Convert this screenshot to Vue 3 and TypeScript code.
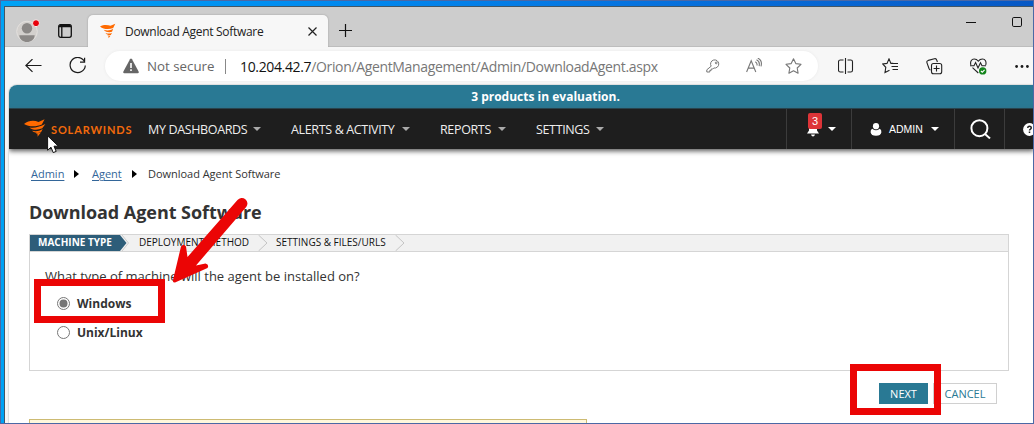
<script setup lang="ts">
import { ref } from 'vue'

interface MenuItem { label: string; cls: string }

const menu: MenuItem[] = [
  { label: 'MY DASHBOARDS', cls: 'm-dash' },
  { label: 'ALERTS & ACTIVITY', cls: 'm-alerts' },
  { label: 'REPORTS', cls: 'm-reports' },
  { label: 'SETTINGS', cls: 'm-settings' },
]
const machines = ['Windows', 'Unix/Linux']
const selected = ref('Windows')
</script>

<template>
  <div class="screen">
    <div class="window">
      <header class="tabstrip">
        <svg class="avatar" width="25" height="25" viewBox="0 0 25 25">
          <circle cx="12" cy="13.5" r="10.3" fill="#d3d0cd" stroke="#e4e1de" />
          <circle cx="12" cy="10.3" r="5.2" fill="#8b8886" />
          <path d="M4.3 17.2H19.7C19.5 21.5 16 24 12 24S4.5 21.5 4.3 17.2Z" fill="#8b8886" />
          <circle cx="21" cy="5.2" r="3.5" fill="#e8000b" stroke="#eee" />
        </svg>
        <svg class="tabsicon" width="14" height="14" viewBox="0 0 14 14" fill="none" stroke="#111" stroke-width="1.3">
          <rect x=".7" y=".7" width="12.6" height="12.6" rx="2" />
          <path d="M1 2.6H13M3.8 3V13" /><path d="M1.5 1.6H12.5" stroke-width="2" />
        </svg>
        <div class="tab">
          <svg class="favicon" width="16" height="16" viewBox="0 0 16 16" fill="#ff6a00">
            <path d="M0 3.5C4 1.3 8 2 10.5 2.8L15.3 .7L13.2 5C9 6.8 3.5 6.5 0 3.5Z" />
            <path d="M3.7 6.7C7.5 8 10 7.5 13.2 5.8L12 8.8C9 9.7 6 9.2 3.7 6.7Z" />
            <path d="M5.5 10C8 10.9 10 10.7 12 9.7L10.8 12C8.7 12.3 6.7 11.7 5.5 10Z" />
            <path d="M7.3 12.6L10.5 12.7L8.5 15.2L8.6 13.6Z" />
          </svg>
          <span class="tabtitle">Download Agent Software</span>
          <svg class="tabclose" width="9" height="9" viewBox="0 0 9 9" stroke="#222" stroke-width="1.2"><path d="M.5 .5L8.5 8.5M8.5 .5L.5 8.5" /></svg>
        </div>
        <svg class="plus" width="14" height="14" viewBox="0 0 14 14" stroke="#111" stroke-width="1.2"><path d="M6.5 0V13M0 6.5H13" /></svg>
        <svg class="minimize" width="10" height="2" viewBox="0 0 10 2"><path d="M0 .5H10" stroke="#111" /></svg>
        <svg class="maximize" width="10" height="10" viewBox="0 0 10 10"><rect x=".5" y=".5" width="9" height="9" rx="1.3" fill="none" stroke="#111" /></svg>
      </header>

      <div class="toolbar">
        <svg class="back" width="17" height="14" viewBox="0 0 17 14" fill="none" stroke="#1b1b1b" stroke-width="1.2"><path d="M.8 6.5H16.5M7.5 .1L.9 6.5L7.5 12.9" /></svg>
        <svg class="reload" width="18" height="18" viewBox="0 0 18 18" fill="none" stroke="#1b1b1b" stroke-width="1.2"><path d="M15.7 5A7.6 7.6 0 1 0 16.3 8.5M15.6 .7V5.2H11" /></svg>
        <div class="address">
          <svg class="warn" width="16" height="16" viewBox="0 0 16 16">
            <path d="M7 1.3Q8 -.3 9 1.3L15.6 13.6Q16.2 15.2 14.7 15.2H1.3Q-.2 15.2 .4 13.6Z" fill="#666" />
            <path d="M8 5V10M8 11.3V13" stroke="#fff" stroke-width="1.6" />
          </svg>
          <span class="notsecure">Not secure</span>
          <i class="divider"></i>
          <span class="url"><b>10.204.42.7</b>/Orion/AgentManagement/Admin/DownloadAgent.aspx</span>
          <svg class="key" width="14" height="14" viewBox="0 0 14 14" fill="none" stroke="#777" stroke-width="1">
            <path d="M5.2 7.2A4.1 4.1 0 1 1 7.8 9L6.8 10H5.2V11.4H3.8V13H.8V10.8L5.2 7.2Z" stroke-linejoin="round" /><circle cx="10.2" cy="3.9" r=".9" />
          </svg>
          <svg class="read" width="17" height="16" viewBox="0 0 17 16" fill="none" stroke="#777" stroke-width="1.1">
            <path d="M.6 14L5.2 2.7L9.8 14M2.2 10.1H8.2M9.3 3.7C10.8 4.5 11.3 5.9 11 7.5M10.5 1.7C13 2.9 13.8 5.3 13.1 8.1M11.8 .2C15 1.6 16 4.7 15 8.3" />
          </svg>
          <svg class="star" width="17" height="16" viewBox="0 0 17 16" fill="none" stroke="#777" stroke-width="1.1" stroke-linejoin="round">
            <path d="M8.5 .8L10.8 5.6L16 6.3L12.2 10L13.1 15.2L8.5 12.7L3.9 15.2L4.8 10L1 6.3L6.2 5.6Z" />
          </svg>
        </div>
        <svg class="split" width="16" height="16" viewBox="0 0 16 16" fill="none" stroke="#222" stroke-width="1.1">
          <path d="M7.5 0V16M5.5 2H2.3Q.5 2 .5 3.8V12.2Q.5 14 2.3 14H5.5M9.5 2H12.7Q14.5 2 14.5 3.8V12.2Q14.5 14 12.7 14H9.5" />
        </svg>
        <svg class="favs" width="17" height="16" viewBox="0 0 17 16" fill="none" stroke="#222" stroke-width="1.1">
          <path d="M11.2 5.4H8.9L7 .9L5 5.4L.8 6L3.8 9.3L3 14.5L7.5 12.2M10.5 5.5H16M9.5 8.5H16M10.5 11.5H16" />
        </svg>
        <svg class="collections" width="17" height="17" viewBox="0 0 17 17" fill="none" stroke="#222" stroke-width="1.1">
          <path d="M11.4 4L10.7 2Q10.2 .3 8.4 .8L2.3 2.4Q.4 3 1 4.8L3 10.5Q3.5 11.8 4.5 12" />
          <rect x="5.5" y="5.5" width="10.2" height="10.2" rx="2" /><path d="M10.5 7.6V13.6M7.6 10.5H13.6" />
        </svg>
        <svg class="health" width="17" height="17" viewBox="0 0 17 17" fill="none" stroke="#222" stroke-width="1.1">
          <path d="M.9 7C-.1 3.5 1.5 1 4.2 1Q6.7 1 8.3 3.2Q10 1 12.5 1C15.2 1 16.7 3.5 15.7 7M2.5 9.7L8.3 15" />
          <path d="M0 7.8H4L5.6 4.6L8 10L10.5 4.8L12 7.8H16" />
          <circle cx="12.7" cy="12.9" r="3.7" fill="#13851b" stroke="none" /><path d="M10.9 13L12.3 14.2L14.6 11.8" stroke="#fff" />
        </svg>
        <svg class="dots" width="14" height="3" viewBox="0 0 14 3" fill="#1b1b1b"><circle cx="1.6" cy="1.5" r="1.4" /><circle cx="7" cy="1.5" r="1.4" /><circle cx="12.4" cy="1.5" r="1.4" /></svg>
      </div>

      <main class="page">
        <div class="banner"><span>3 products in evaluation.</span></div>
        <nav class="nav">
          <svg class="logomark" width="22" height="18" viewBox="0 0 22 18" fill="#ff6a00">
            <path d="M0 4.9C4.5 1.2 10 .8 14.5 2.9L20.6 .3L17.8 5.4C13 7.5 5.5 8.4 0 4.9Z" />
            <path d="M5.3 8.4C10 9.1 14 8.6 21.4 5.1L18.3 9.3C13.4 11.4 8.5 11.2 5.3 8.4Z" />
            <path d="M8 11.8C12 12.7 15 12.3 18.7 10L17 13.3C13.7 14.4 10.5 14.1 8 11.8Z" />
            <path d="M11.8 14.5L16.7 13.8L13.5 17.8L13.7 15.4Z" />
          </svg>
          <span class="logotext">SOLARWINDS</span>
          <div v-for="item in menu" :key="item.label" class="menu" :class="item.cls">
            <span>{{ item.label }}</span><i class="caret"></i>
          </div>
          <div class="cell alerts">
            <svg class="bell" width="12" height="9" viewBox="0 0 12 9" fill="#fff"><path d="M2 0H10V2.5L12 5.5H0L2 2.5ZM4 6.5H8Q7.5 8.5 6 8.5T4 6.5Z" /></svg>
            <span class="badge">3</span>
            <i class="caret light"></i>
          </div>
          <div class="cell admin">
            <svg width="12" height="13" viewBox="0 0 12 13" fill="#fff"><circle cx="6" cy="3.2" r="3.1" /><path d="M2.3 5.7Q6 9 9.7 5.7Q11.6 6.6 11.4 9.2Q10.8 12.7 6 12.8Q1.2 12.7 .6 9.2Q.4 6.6 2.3 5.7Z" /></svg>
            <span>ADMIN</span><i class="caret light"></i>
          </div>
          <div class="cell search">
            <svg width="21" height="20" viewBox="0 0 21 20" fill="none" stroke="#fff" stroke-width="2"><circle cx="9.4" cy="9.2" r="8" /><path d="M15 15L20 19.4" /></svg>
          </div>
          <div class="cell help">
            <svg width="13" height="13" viewBox="0 0 13 13"><circle cx="6.5" cy="6.5" r="6.4" fill="#fff" /><path d="M4.7 5Q4.8 3.3 6.5 3.3T8.3 4.8Q8.3 5.7 7.2 6.3Q6.5 6.7 6.5 7.6M6.5 8.6V10" fill="none" stroke="#222" stroke-width="1.5" /></svg>
          </div>
        </nav>

        <div class="crumbs">
          <a class="c1">Admin</a><i class="tri"></i><a class="c2">Agent</a><i class="tri"></i><span class="c3">Download Agent Software</span>
        </div>
        <h1><span>Download Agent Software</span></h1>

        <section class="wizard">
          <div class="steps">
            <span class="step active"><b>MACHINE TYPE</b></span>
            <svg class="chev" width="12" height="16" viewBox="0 0 12 16" fill="none" stroke="#ccc"><path d="M0 0H2L8.5 8L2 16H0Z" fill="#2d5d79" stroke="none" /><path d="M4 0L10.5 8L4 16" /></svg>
            <span class="step deploy">DEPLOYMENT METHOD</span>
            <svg class="chev" width="10" height="16" viewBox="0 0 10 16" fill="none" stroke="#c4c4c4"><path d="M.5 0L9 8L.5 16" /></svg>
            <span class="step files">SETTINGS &amp; FILES/URLS</span>
            <svg class="chev" width="10" height="16" viewBox="0 0 10 16" fill="none" stroke="#c4c4c4"><path d="M.5 0L9 8L.5 16" /></svg>
          </div>
          <p class="question">What type of machine will the agent be installed on?</p>
          <div v-for="(name, i) in machines" :key="name" class="choice" :class="'choice' + i" @click="selected = name">
            <i class="radio" :class="{ on: selected === name }"></i><span>{{ name }}</span>
          </div>
        </section>
        <div class="buttons">
          <button class="next">NEXT</button><button class="cancel">CANCEL</button>
        </div>
        <div class="notice"></div>
      </main>
    </div>

    <svg class="pointer" width="13" height="19" viewBox="0 0 13 19"><path d="M.6 .8V15.2L4 12.2L6.2 17.6L9.2 16.4L7 11.2H11.4Z" fill="#fff" stroke="#111" stroke-width="1" /></svg>
    <div class="mark mark-option"></div>
    <div class="mark mark-next"></div>
    <svg class="arrow" width="90" height="90" viewBox="0 0 90 90">
      <path d="M76.5 4A5.4 5.4 0 0 1 85.2 11L35 69.5L44.5 67.5Q48.5 68.5 46.5 72L14 86.5Q11.3 86.5 12 84L20 50.5Q22.5 47 25 50.5L26.5 61Z" fill="#eb0505" />
    </svg>
  </div>
</template>

<style>
body { background: #fff; overflow: hidden; }
</style>
<style scoped>
* { box-sizing: border-box; }
svg { display: block; flex: none; }
.screen { position: relative; width: 1034px; height: 424px; overflow: hidden; border: 1px solid #4b68a5; padding: 5px 0 0 3px; font-family: "Open Sans", "Noto Sans", sans-serif; background: linear-gradient(90deg, #00a3f5 0, #008bf0 30%, #0674e0 60%, #0758c5 100%); }
.window { width: 1030px; height: 418px; border: solid #425666; border-width: 1px 0 0 1px; background: #f7f7f7; }
.tabstrip { height: 40px; background: #cdcdcd; border-bottom: 1px solid #bdbdbd; display: flex; align-items: flex-start; white-space: nowrap; }
.avatar { margin: 11px 0 0 10px; }
.tabsicon { margin: 17px 0 0 18px; }
.tab { width: 240px; height: 32px; margin: 8px 0 0 16px; background: #f7f7f7; border-radius: 5px 5px 0 0; box-shadow: 0 0 2px #999; clip-path: inset(-3px -3px 0 -3px); display: flex; align-items: center; }
.favicon { margin-left: 12px; }
.tabtitle { width: 182px; margin-left: 9px; font-size: 12px; letter-spacing: -.3px; color: #222; }
.tabclose { margin: 1px 0 0 1px; }
.plus { margin: 17px 0 0 11px; }
.minimize { margin: 15px 0 0 613px; }
.maximize { margin: 10px 0 0 36px; }
.toolbar { height: 38px; display: flex; align-items: center; white-space: nowrap; }
.back { margin-left: 20px; }
.reload { margin-left: 27px; }
.address { width: 713px; height: 30px; margin-left: 18px; border-radius: 15px; background: #fff; box-shadow: 0 0 3px #e8e8e8; display: flex; align-items: center; }
.warn { margin-left: 18px; }
.notsecure { width: 78px; margin-left: 8px; color: #666; font-size: 13.3px; }
.divider { width: 1px; height: 15px; background: #888; }
.url { width: 466px; margin-left: 14px; color: #777; font-size: 14px; letter-spacing: -.35px; }
.url b { color: #111; font-weight: 400; }
.read { margin-left: 26px; }
.star { margin-left: 22px; }
.split { margin-left: 20px; }
.favs { margin-left: 28px; }
.collections { margin-left: 27px; }
.health { margin-left: 27px; }
.dots { margin-left: 28px; }
.page { margin-left: 4px; background: #fff; height: 340px; border-radius: 8px 0 0 0; box-shadow: 0 0 1px 1px #ddd; overflow: hidden; }
.banner { height: 24px; background: #297994; color: #fff; font-size: 12px; font-weight: 700; text-align: center; line-height: 24px; border-bottom: 1px solid #20404c; padding-left: 48px; }
.nav { height: 40px; background: #1e1e1e; display: flex; align-items: center; color: #eee; white-space: nowrap; box-shadow: 0 2px 5px #555; position: relative; }
.logomark { margin: -3px 0 0 15px; }
.logotext { width: 97px; margin-left: 5px; color: #f26a0c; font: 700 11px Lato, sans-serif; letter-spacing: .85px; }
.menu { display: flex; align-items: center; font-size: 12.5px; font-weight: 500; letter-spacing: -.35px; }
.menu span { flex: 1; }
.caret { width: 0; height: 0; border: 4px solid transparent; border-top-color: #aaa; border-bottom: 0; }
.caret.light { border-top-color: #fff; }
.m-dash { width: 113px; }
.m-alerts { width: 119px; margin-left: 30px; }
.m-reports { width: 66px; margin-left: 30px; }
.m-settings { width: 68px; margin-left: 30px; }
.cell { height: 40px; border-left: 1px solid #3c3c3c; display: flex; align-items: center; }
.alerts { width: 65px; margin-left: 182px; position: relative; }
.bell { margin: 7px 0 0 20px; }
.alerts .caret { margin-left: 9px; }
.badge { position: absolute; left: 21px; top: 4px; width: 14px; height: 16px; background: #dd3438; border-radius: 2px; color: #fff; text-align: center; font: 11px/17px "Liberation Sans", sans-serif; }
.admin { width: 103px; }
.admin svg { margin: 0 7px 0 18px; }
.admin span { width: 42px; font: 10.5px "Liberation Sans", sans-serif; color: #fff; }
.search { width: 50px; padding-left: 15px; }
.help { width: 29px; padding-left: 18px; }
.crumbs { height: 49px; padding-left: 22px; display: flex; align-items: center; font-size: 11px; color: #333; white-space: nowrap; }
.crumbs a { color: #336699; text-decoration: underline; text-underline-offset: 2px; }
.c1 { width: 43px; }
.c2 { width: 40px; margin-left: 13px; }
.c3 { margin-left: 11px; letter-spacing: -.03px; }
.tri { border: 4px solid transparent; border-left: 5px solid #000; border-right: 0; }
h1 { margin: 0 0 0 20px; height: 36px; line-height: 28px; font-size: 18px; letter-spacing: -.05px; color: #333; white-space: nowrap; }
.wizard { margin-left: 20px; width: 980px; height: 137px; border: 1px solid #d5d5d5; }
.steps { height: 17px; background: #f1f1f1; border-bottom: 1px solid #d5d5d5; display: flex; font-size: 10px; line-height: 15px; color: #111; white-space: nowrap; }
.active { width: 88px; background: #2d5d79; color: #fff; padding-left: 8px; }
.deploy { width: 119px; margin-left: 9px; }
.files { width: 119px; margin-left: 8px; }
.question { margin: 13px 0 0 15px; font-size: 13px; line-height: 22px; color: #333; white-space: nowrap; }
.choice { margin-left: 27px; height: 20px; display: flex; align-items: center; font-size: 12px; font-weight: 700; color: #333; }
.choice0 { margin-top: 6px; }
.choice1 { margin-top: 9px; }
.radio { width: 13px; height: 13px; border: 1px solid #777; border-radius: 50%; margin-right: 7px; padding: 2px; }
.radio.on::before { content: ""; display: block; width: 7px; height: 7px; background: #767676; border-radius: 50%; box-shadow: 0 0 0 .5px #767676; }
.buttons { height: 21px; margin: 12px 0 0 870px; display: flex; }
button { height: 21px; padding: 0; border: 1px solid #297994; font: 11px "Open Sans", sans-serif; background: #297994; color: #fff; }
.next { width: 49px; }
.cancel { width: 64px; margin-left: 5px; border-color: #d0d0d0; background: #fff; color: #297994; }
.notice { width: 558px; height: 20px; margin: 15px 0 0 20px; border: 1px solid #cdbb73; background: #fff7dc; }
.pointer { position: absolute; left: 46px; top: 134px; }
.mark { position: absolute; border: 7px solid #eb0505; }
.mark-option { left: 33px; top: 278px; width: 131px; height: 44px; }
.mark-next { left: 849px; top: 363px; width: 91px; height: 51px; }
.arrow { position: absolute; left: 160px; top: 195px; overflow: visible; }
</style>
